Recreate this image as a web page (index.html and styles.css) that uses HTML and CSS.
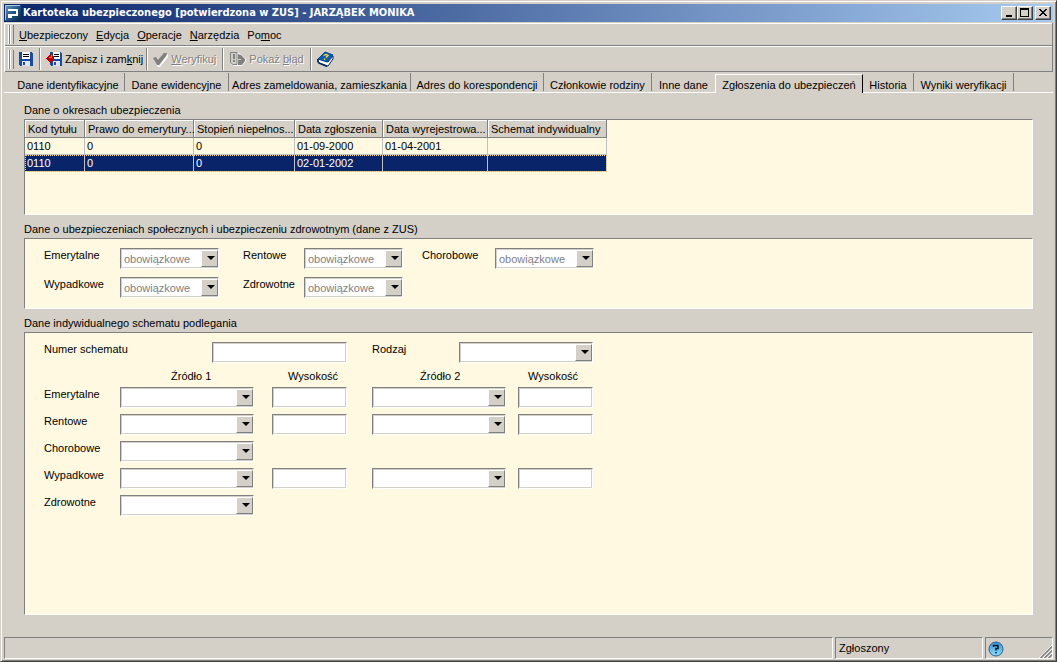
FILE: index.html
```
<!DOCTYPE html>
<html lang="pl">
<head>
<meta charset="utf-8">
<title>Kartoteka ubezpieczonego</title>
<link rel="stylesheet" href="styles.css">
</head>
<body>
<div class="window">
  <header class="titlebar">
    <svg class="app-icon" width="16" height="16" viewBox="0 0 16 16" aria-hidden="true">
      <defs><linearGradient id="app" x1="0" y1="0" x2="1" y2="1"><stop offset="0" stop-color="#6f9cc0"/><stop offset=".5" stop-color="#1f5688"/><stop offset="1" stop-color="#0b2440"/></linearGradient></defs>
      <rect width="16" height="16" fill="url(#app)"/>
      <path d="M.5 15V.5H15" fill="none" stroke="#a9cbe2"/>
      <path d="M3 4h10v7H7v2H3V9h8V6H3z" fill="#fff"/>
    </svg>
    <h1 class="title">Kartoteka ubezpieczonego [potwierdzona w ZUS] - JARZĄBEK MONIKA</h1>
    <div class="controls">
      <button class="control" aria-label="Minimalizuj"><svg width="12" height="10" shape-rendering="crispEdges"><path d="M3 7h6v2H3z"/></svg></button>
      <button class="control" aria-label="Maksymalizuj"><svg width="12" height="10" shape-rendering="crispEdges"><path d="M1 0h9v9H1zM2 2v6h7V2z" fill-rule="evenodd"/></svg></button>
      <button class="control control-close" aria-label="Zamknij"><svg width="12" height="10" shape-rendering="crispEdges"><path d="M2 1h2v1h1v1h2V2h1V1h2v1H9v1H8v1H7v1h1v1h1v1h1v1H8V7H7V6H5v1H4v1H2V7h1V6h1V5h1V4H4V3H3V2H2z"/></svg></button>
    </div>
  </header>

  <div class="bars">
    <nav class="band menubar">
      <span class="gripper"></span>
      <button class="menu-item"><u>U</u>bezpieczony</button>
      <button class="menu-item"><u>E</u>dycja</button>
      <button class="menu-item"><u>O</u>peracje</button>
      <button class="menu-item"><u>N</u>arzędzia</button>
      <button class="menu-item">Po<u>m</u>oc</button>
    </nav>
    <div class="band toolbar">
      <span class="gripper"></span>
      <button class="tool tool-save" aria-label="Zapisz">
        <svg width="14" height="14" viewBox="0 0 14 14" shape-rendering="crispEdges"><path d="M0 0h13v1h1v13H1v-1H0z" fill="#1a4a9c"/><path d="M3 0h8v7H3z" fill="#fff"/><path d="M4 2h6v1H4zM4 4h6v1H4z" fill="#000"/><path d="M3 9h8v5H3z" fill="#dfe6f0"/><path d="M4 10h2v3H4z" fill="#1a4a9c"/></svg>
      </button>
      <button class="tool tool-close">
        <svg width="16" height="16" viewBox="0 0 16 16" shape-rendering="crispEdges"><path d="M4 1h11v1h1v13H5v-1H4z" fill="#1a4a9c"/><path d="M7 1h7v7H7z" fill="#fff"/><path d="M8 3h5v1H8zM8 5h5v1H8z" fill="#000"/><path d="M7 10h7v5H7z" fill="#dfe6f0"/><path d="M8 11h2v3H8z" fill="#1a4a9c"/><path d="M5 2h1v3h2v5H6v3H5v-1H4v-1H3v-1H2V9H1V8H0V7h1V6h1V5h1V4h1V3h1z" fill="#c00000"/><path d="M3 6h2V4h1v3H3z" fill="#ff6a50"/></svg>
        <span>Zapisz i zam<u>k</u>nij</span>
      </button>
      <button class="tool tool-verify" disabled>
        <svg width="15" height="15" viewBox="0 0 15 15"><path d="M2 7l4 7L14 3l1-1v3L7 15H5L1 8z" fill="#fff"/><path d="M0 6l3-1 2 3 6-7h3l-1 3-7 9H4z" fill="#808080"/></svg>
        <span><u>W</u>eryfikuj</span>
      </button>
      <button class="tool tool-error" disabled>
        <svg width="17" height="16" viewBox="0 0 17 16"><path d="M2 2h8l7 6v2l-4 5H5l-3-2z" fill="#fff"/><path d="M1.500 1.500h6.500v12h-4l-2.500-2z" fill="#d4d0c8" stroke="#808080"/><path d="M4 3h2v5H4zM4 9h2v2H4z" fill="#808080"/><path d="M9 3l3 1 4 4v2l-3 4H9z" fill="#808080"/><path d="M9 8.500h3" stroke="#d4d0c8"/></svg>
        <span>Pokaż <u>b</u>łąd</span>
      </button>
      <button class="tool" aria-label="Pomoc">
        <svg width="17" height="16" viewBox="0 0 17 16"><path d="M1 9l2-1 8 3 5-6v3l-5 7-9-3z" fill="#fff" stroke="#0a2c66"/><path d="M1 8l7-7 8 3-6 7z" fill="#0f5cb8" stroke="#0a3f8c"/><path d="M1 8c-1 2 0 3 1 4l8 3.500" fill="none" stroke="#0a2c66" stroke-width="1.500"/><path d="M6.500 4.500L9 3.500l2 1L9 6.500M7.500 7.500v1.500" fill="none" stroke="#ffe838" stroke-width="1.300"/></svg>
      </button>
    </div>
  </div>

  <div class="tabs" role="tablist">
    <button class="tab" role="tab">Dane identyfikacyjne</button>
    <button class="tab" role="tab">Dane ewidencyjne</button>
    <button class="tab" role="tab">Adres zameldowania, zamieszkania</button>
    <button class="tab" role="tab">Adres do korespondencji</button>
    <button class="tab" role="tab">Członkowie rodziny</button>
    <button class="tab" role="tab">Inne dane</button>
    <button class="tab selected" role="tab" aria-selected="true">Zgłoszenia do ubezpieczeń</button>
    <button class="tab" role="tab">Historia</button>
    <button class="tab" role="tab">Wyniki weryfikacji</button>
  </div>

  <main class="content">
    <h2 class="caption">Dane o okresach ubezpieczenia</h2>
    <section class="panel periods">
      <table class="grid">
        <colgroup><col class="c-code"><col class="c-right"><col class="c-degree"><col class="c-in"><col class="c-out"><col class="c-scheme"></colgroup>
        <thead><tr><th>Kod tytułu</th><th>Prawo do emerytury...</th><th>Stopień niepełnos...</th><th>Data zgłoszenia</th><th>Data wyrejestrowa...</th><th>Schemat indywidualny</th></tr></thead>
        <tbody>
          <tr><td>0110</td><td>0</td><td>0</td><td>01-09-2000</td><td>01-04-2001</td><td></td></tr>
          <tr class="active"><td>0110</td><td>0</td><td>0</td><td>02-01-2002</td><td></td><td></td></tr>
        </tbody>
      </table>
    </section>

    <h2 class="caption">Dane o ubezpieczeniach społecznych i ubezpieczeniu zdrowotnym (dane z ZUS)</h2>
    <section class="panel zus">
      <label for="z-em">Emerytalne</label>
      <span class="combo"><select id="z-em" disabled><option>obowiązkowe</option></select></span>
      <label for="z-re">Rentowe</label>
      <span class="combo"><select id="z-re" disabled><option>obowiązkowe</option></select></span>
      <label for="z-ch">Chorobowe</label>
      <span class="combo"><select id="z-ch" disabled><option>obowiązkowe</option></select></span>
      <label for="z-wy">Wypadkowe</label>
      <span class="combo"><select id="z-wy" disabled><option>obowiązkowe</option></select></span>
      <label for="z-zd">Zdrowotne</label>
      <span class="combo"><select id="z-zd" disabled><option>obowiązkowe</option></select></span>
    </section>

    <h2 class="caption">Dane indywidualnego schematu podlegania</h2>
    <section class="panel scheme">
      <div class="scheme-top">
        <label for="s-no">Numer schematu</label>
        <input class="field" id="s-no" type="text">
        <label for="s-kind">Rodzaj</label>
        <span class="combo"><select id="s-kind"><option></option></select></span>
      </div>
      <div class="scheme-head">
        <span>Źródło 1</span><span>Wysokość</span><span>Źródło 2</span><span>Wysokość</span>
      </div>
      <div class="scheme-row">
        <label for="e1">Emerytalne</label>
        <span class="combo"><select id="e1"><option></option></select></span>
        <input class="field" type="text" aria-label="Emerytalne, wysokość 1">
        <span class="combo"><select aria-label="Emerytalne, źródło 2"><option></option></select></span>
        <input class="field" type="text" aria-label="Emerytalne, wysokość 2">
      </div>
      <div class="scheme-row">
        <label for="r1">Rentowe</label>
        <span class="combo"><select id="r1"><option></option></select></span>
        <input class="field" type="text" aria-label="Rentowe, wysokość 1">
        <span class="combo"><select aria-label="Rentowe, źródło 2"><option></option></select></span>
        <input class="field" type="text" aria-label="Rentowe, wysokość 2">
      </div>
      <div class="scheme-row">
        <label for="c1">Chorobowe</label>
        <span class="combo"><select id="c1"><option></option></select></span>
      </div>
      <div class="scheme-row">
        <label for="w1">Wypadkowe</label>
        <span class="combo"><select id="w1"><option></option></select></span>
        <input class="field" type="text" aria-label="Wypadkowe, wysokość 1">
        <span class="combo"><select aria-label="Wypadkowe, źródło 2"><option></option></select></span>
        <input class="field" type="text" aria-label="Wypadkowe, wysokość 2">
      </div>
      <div class="scheme-row">
        <label for="d1">Zdrowotne</label>
        <span class="combo"><select id="d1"><option></option></select></span>
      </div>
    </section>
  </main>

  <footer class="status">
    <div class="status-cell"></div>
    <div class="status-cell">Zgłoszony</div>
    <div class="status-cell status-help">
      <svg class="help" width="16" height="16" viewBox="0 0 16 16" aria-hidden="true">
        <defs><linearGradient id="help" x1="0" y1="0" x2="0" y2="1"><stop offset="0" stop-color="#3b8fd0"/><stop offset="1" stop-color="#8fe0ff"/></linearGradient></defs>
        <circle cx="8" cy="8" r="7" fill="url(#help)" stroke="#27608f"/>
        <path d="M5.500 6V4.500h4.500v3H8v2M8 11v1.500" fill="none" stroke="#001830" stroke-width="1.500"/>
      </svg>
      <svg class="grip" width="13" height="13" viewBox="0 0 13 13" aria-hidden="true"><path d="M0 13L13 0M4 13l9-9M8 13l5-5" stroke="#fff"/><path d="M1.500 13L13 1.500M5.500 13L13 5.500M9.500 13L13 9.500" stroke="#808080" stroke-width="1.500"/></svg>
    </div>
  </footer>
</div>
</body>
</html>
```
FILE: styles.css
```
:root {
  --face: #d4d0c8;
  --shadow: #808080;
  --dark: #404040;
  --cream: #fff9e1;
  --navy: #0a246a;
}

* { box-sizing: border-box; }

body {
  margin: 0;
  background: var(--face);
  color: #000;
  font: 11px/14px "Liberation Sans", Arial, sans-serif;
}

button, input, select { font: inherit; color: inherit; margin: 0; }

button { border: 0; padding: 0; background: none; white-space: nowrap; }

svg { display: block; flex: none; }

.window {
  display: flex;
  flex-direction: column;
  min-height: 100vh;
  padding: 3px;
  border: 1px solid;
  border-color: var(--face) var(--dark) var(--dark) var(--face);
  box-shadow: inset 1px 1px #fff, inset -1px -1px var(--shadow);
}

.titlebar {
  display: flex;
  align-items: center;
  height: 18px;
  padding: 0 2px 0 1px;
  background: linear-gradient(to right, #0a246a, #a6caf0);
  color: #fff;
}

.title {
  flex: 1;
  margin: 0 0 0 2px;
  font: bold 11px/16px "DejaVu Sans Condensed", "Noto Sans", sans-serif;
  white-space: nowrap;
}

.controls { display: flex; }

.control {
  width: 16px;
  height: 14px;
  padding: 1px;
  background: var(--face);
  border: 1px solid;
  border-color: #fff var(--dark) var(--dark) #fff;
  box-shadow: inset -1px -1px var(--shadow);
}

.control-close { margin-left: 2px; }

.bars {
  margin-top: 1px;
  border-right: 1px solid var(--shadow);
  border-left: 1px solid #fff;
}

.band {
  display: flex;
  align-items: center;
  padding-left: 4px;
  border-top: 1px solid #fff;
  border-bottom: 1px solid var(--shadow);
}

.menubar { height: 23px; gap: 8px; }

.toolbar { height: 26px; }

.gripper {
  width: 5px;
  height: 19px;
  border: solid var(--shadow);
  border-width: 0 1px;
  box-shadow: inset 1px 0 #fff, -1px 0 #fff;
}

.menubar .gripper { margin-right: -3px; }

.tool {
  display: flex;
  align-items: center;
  gap: 3px;
  height: 22px;
  padding: 0 6px;
  border-right: 1px solid var(--shadow);
  box-shadow: 1px 0 #fff;
}

.tool:last-child { border: 0; box-shadow: none; }

.tool-save { padding-left: 5px; }

.tool-close { padding-right: 3px; }

.tool:disabled { color: var(--shadow); text-shadow: 1px 1px #fff; }

.tabs {
  display: grid;
  grid-template-columns: 121px 104px 182px 133px 108px 63px 148px 51px 100px;
  align-items: end;
  height: 21px;
  border-bottom: 1px solid #fff;
}

.tab {
  display: flex;
  justify-content: center;
  height: 18px;
  margin-bottom: 1px;
  padding-top: 5px;
  border-right: 1px solid var(--shadow);
}

.tab:first-child { padding-left: 8px; }

.tab:has(+ .selected) { border-right: 0; }

.tab.selected {
  height: 19px;
  margin-bottom: -1px;
  padding-top: 3px;
  background: var(--face);
  border: solid;
  border-width: 1px 1px 0;
  border-color: #fff #000 #000 #fff;
}

.content {
  flex: 1;
  display: flex;
  flex-direction: column;
  padding: 3px 20px 22px;
}

.caption {
  margin: 7px 0 2px;
  font: inherit;
}

.panel {
  background: var(--cream);
  border: 1px solid;
  border-color: var(--shadow) #fff #fff var(--shadow);
}

.periods { min-height: 96px; }

.grid {
  table-layout: fixed;
  width: 582px;
  border-collapse: separate;
  border-spacing: 0;
}

.c-code { width: 60px; }
.c-right { width: 109px; }
.c-degree { width: 101px; }
.c-in { width: 88px; }
.c-out { width: 105px; }
.c-scheme { width: 119px; }

.grid th {
  height: 18px;
  padding: 0 0 0 3px;
  background: var(--face);
  border-bottom: 1px solid var(--shadow);
  border-right: 1px solid var(--shadow);
  box-shadow: inset 1px 1px #fff;
  font-weight: normal;
  text-align: left;
  white-space: nowrap;
}

.grid td {
  height: 17px;
  padding: 0 0 0 2px;
  border-right: 1px solid #c0c0c0;
  border-bottom: 1px solid #c0c0c0;
}

.active td { background: var(--navy); color: #fff; }

.active { outline: 1px dotted #f5dc95; outline-offset: -1px; }

.zus {
  display: grid;
  grid-template-columns: 76px 123px 61px 118px 73px 99px;
  grid-auto-rows: 29px;
  align-items: start;
  min-height: 71px;
  padding: 9px 19px 0;
}

.zus .combo { width: 99px; }

.scheme { flex: 1; padding: 9px 19px; }

.scheme-top {
  display: grid;
  grid-template-columns: 168px 135px 112px 134px;
  align-items: start;
}

.scheme-top label:nth-of-type(2) { padding-left: 25px; }

.scheme-head {
  display: grid;
  grid-template-columns: 117px 132px 108px 50px;
  margin: 6px 0 4px;
  padding-left: 127px;
}

.scheme-row {
  display: grid;
  grid-template-columns: 76px 152px 100px 146px 75px;
  align-items: start;
  height: 27px;
}

.scheme-row .combo { width: 134px; }
.scheme-row .field { width: 75px; }

.field, .combo select {
  display: block;
  width: 100%;
  height: 21px;
  padding: 0 3px;
  background: #fff;
  border: 1px solid;
  border-color: var(--shadow) #fff #fff var(--shadow);
  border-radius: 0;
  box-shadow: inset -1px -1px var(--face), inset 1px 1px var(--face);
  outline: 0;
}

.combo { position: relative; display: block; }

.combo select { appearance: none; }

.combo select:disabled { color: var(--shadow); opacity: 1; }

.combo::before {
  content: "";
  position: absolute;
  top: 2px;
  right: 1px;
  bottom: 2px;
  width: 15px;
  background: var(--face);
  border: 1px solid;
  border-color: #fff var(--shadow) var(--shadow) #fff;
  pointer-events: none;
}

.combo::after {
  content: "";
  position: absolute;
  top: 8px;
  right: 4px;
  border: 4px solid transparent;
  border-top-color: #000;
  border-bottom: 0;
  pointer-events: none;
}

.status {
  display: grid;
  grid-template-columns: 1fr 148px 68px;
  gap: 2px;
  height: 21px;
}

.status-cell {
  padding: 3px;
  border: 1px solid;
  border-color: var(--shadow) #fff #fff var(--shadow);
}

.status-help {
  display: flex;
  justify-content: space-between;
  align-items: flex-end;
  padding: 0 0 0 2px;
}

.help { margin-bottom: 1px; }
```
